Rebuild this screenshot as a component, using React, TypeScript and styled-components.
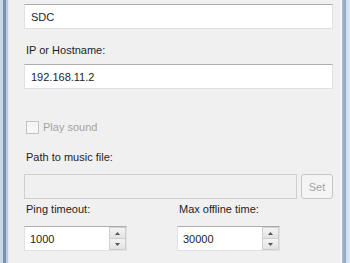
import styled, { createGlobalStyle } from 'styled-components'

const GlobalStyle = createGlobalStyle`
  html, body {
    margin: 0;
    padding: 0;
    width: 350px;
    height: 263px;
    overflow: hidden;
    background: #f0f0f0;
  }
  body {
    font-family: "Liberation Sans", Arial, sans-serif;
    font-size: 11px;
    color: #1e1e1e;
  }
`

const App = () => {
  return (
    <>
      <GlobalStyle />
      <Window>
        <LeftFrame />
        <Content>
          <TextBox value="SDC" readOnly />
          <Label $top={13}>IP or Hostname:</Label>
          <TextBox $top={6} value="192.168.11.2" readOnly />
          <CheckRow>
            <CheckBox />
            <span>Play sound</span>
          </CheckRow>
          <Label $top={14}>Path to music file:</Label>
          <PathRow>
            <TextBox $disabled readOnly value="" />
            <SetButton disabled>Set</SetButton>
          </PathRow>
          <Columns>
            <Field>
              <Label>Ping timeout:</Label>
              <Spinner value="1000" />
            </Field>
            <Field>
              <Label>Max offline time:</Label>
              <Spinner value="30000" />
            </Field>
          </Columns>
        </Content>
        <RightFrame />
      </Window>
    </>
  )
}

const Spinner = ({ value }: { value: string }) => (
  <SpinWrap>
    <SpinInput value={value} readOnly />
    <SpinButtons>
      <SpinBtn>
        <svg width="5" height="3" viewBox="0 0 5 3">
          <path d="M0 3 L2.5 0 L5 3 Z" fill="#555555" />
        </svg>
      </SpinBtn>
      <SpinBtn>
        <svg width="5" height="3" viewBox="0 0 5 3">
          <path d="M0 0 L2.5 3 L5 0 Z" fill="#555555" />
        </svg>
      </SpinBtn>
    </SpinButtons>
  </SpinWrap>
)

export default App

const Window = styled.div`
  display: flex;
  width: 350px;
  height: 263px;
  background: #f0f0f0;
`

const LeftFrame = styled.div`
  width: 9px;
  flex-shrink: 0;
  background: linear-gradient(
    to right,
    #c9d6e4 0px,
    #c9d6e4 3px,
    #7890b0 3px,
    #7890b0 6px,
    #b9cade 6px,
    #b9cade 8px,
    #e4e9ef 8px,
    #e4e9ef 9px
  );
`

const RightFrame = styled.div`
  width: 10px;
  flex-shrink: 0;
  background: linear-gradient(
    to right,
    #e6ebf0 0px,
    #fbfcfd 1px,
    #fbfcfd 2px,
    #a4b8cf 2px,
    #8fa6c2 6px,
    #cfdbe8 6px,
    #dfe8f1 10px
  );
`

const Content = styled.div`
  flex: 1;
  display: flex;
  flex-direction: column;
  padding: 4px 7px 0 15px;
`

const Label = styled.div<{ $top?: number }>`
  margin-top: ${(p) => p.$top ?? 0}px;
  padding-left: 2px;
  height: 16px;
  line-height: 16px;
  white-space: nowrap;
`

const TextBox = styled.input<{ $top?: number; $disabled?: boolean }>`
  box-sizing: border-box;
  margin: ${(p) => p.$top ?? 0}px 0 0 0;
  width: 100%;
  height: 25px;
  padding: 0 6px;
  border: 1px solid #dde2e8;
  border-top-color: #abadb3;
  background: ${(p) => (p.$disabled ? '#f0f0f0' : '#ffffff')};
  border-color: ${(p) => (p.$disabled ? '#cfcfcf' : undefined)};
  font: inherit;
  color: #1e1e1e;
  outline: none;
`

const CheckRow = styled.div`
  margin-top: 30px;
  height: 16px;
  display: flex;
  align-items: center;
  gap: 4px;
  padding-left: 2px;
  color: #a3a3a3;
`

const CheckBox = styled.div`
  box-sizing: border-box;
  width: 13px;
  height: 13px;
  border: 1px solid #c2c2c2;
  background: linear-gradient(#f2f2f2, #fafafa);
  box-shadow: inset 0 0 0 1px #f7f7f7;
`

const PathRow = styled.div`
  margin-top: 9px;
  display: flex;
  gap: 4px;
`

const SetButton = styled.button`
  box-sizing: border-box;
  flex-shrink: 0;
  width: 32px;
  height: 25px;
  padding: 0;
  border: 1px solid #c6c6c6;
  border-radius: 3px;
  background: #f4f4f4;
  color: #a3a3a3;
  font: inherit;
`

const Columns = styled.div`
  margin-top: 2px;
  display: grid;
  grid-template-columns: 153px 1fr;
`

const Field = styled.div`
  display: flex;
  flex-direction: column;
  gap: 9px;
`

const SpinWrap = styled.div`
  box-sizing: border-box;
  display: flex;
  width: 103px;
  height: 25px;
  border: 1px solid #dde2e8;
  border-top-color: #abadb3;
  background: #ffffff;
`

const SpinInput = styled.input`
  flex: 1;
  min-width: 0;
  border: none;
  padding: 0 5px;
  font: inherit;
  color: #1e1e1e;
  background: transparent;
  outline: none;
`

const SpinButtons = styled.div`
  width: 17px;
  display: flex;
  flex-direction: column;
`

const SpinBtn = styled.div`
  flex: 1;
  display: flex;
  align-items: center;
  justify-content: center;
  border: 1px solid #cfcfcf;
  margin: -1px 0 0 0;
  background: linear-gradient(#f4f4f4, #e2e2e2);
  &:first-child {
    margin-top: 0;
  }
`
